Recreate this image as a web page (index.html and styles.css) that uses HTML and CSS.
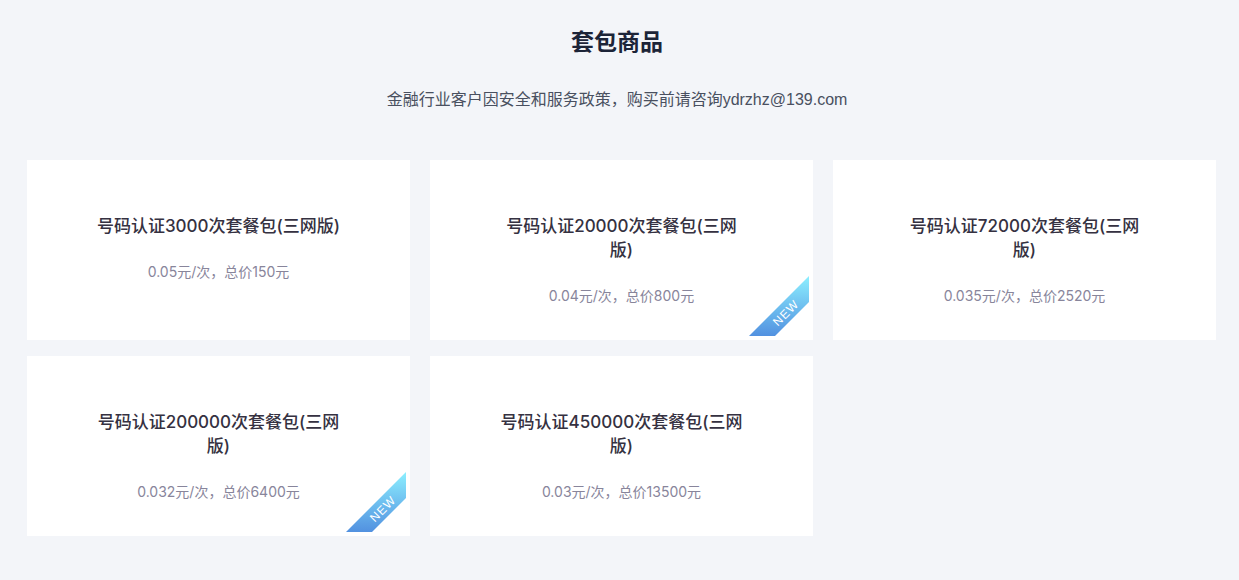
FILE: index.html
```html
<!DOCTYPE html>
<html lang="zh-CN">
<head>
<meta charset="utf-8">
<meta name="viewport" content="width=device-width, initial-scale=1">
<title>套包商品</title>
<link rel="stylesheet" href="styles.css">
</head>
<body>
<svg class="defs" width="0" height="0" aria-hidden="true">
  <defs>
    <linearGradient id="ribbon" x1="0" y1="0" x2="0" y2="1">
      <stop offset="0" stop-color="#8cefff"/>
      <stop offset="1" stop-color="#5291e0"/>
    </linearGradient>
  </defs>
</svg>
<main class="packages">
  <header class="intro">
    <h1 class="intro-title">套包商品</h1>
    <p class="intro-note">金融行业客户因安全和服务政策，购买前请咨询ydrzhz@139.com</p>
  </header>
  <section class="grid">
    <article class="card">
      <h2 class="card-title">号码认证3000次套餐包(三网版)</h2>
      <p class="card-price">0.05元/次，总价150元</p>
    </article>
    <article class="card">
      <h2 class="card-title">号码认证20000次套餐包(三网版)</h2>
      <p class="card-price">0.04元/次，总价800元</p>
      <svg class="badge" viewBox="0 0 60 60" role="img" aria-label="NEW">
        <path d="M0 60 60 0V26L26 60Z" fill="url(#ribbon)"/>
        <text class="badge-text" x="37" y="41" transform="rotate(-45 37 37)">NEW</text>
      </svg>
    </article>
    <article class="card">
      <h2 class="card-title">号码认证72000次套餐包(三网版)</h2>
      <p class="card-price">0.035元/次，总价2520元</p>
    </article>
    <article class="card">
      <h2 class="card-title">号码认证200000次套餐包(三网版)</h2>
      <p class="card-price">0.032元/次，总价6400元</p>
      <svg class="badge" viewBox="0 0 60 60" role="img" aria-label="NEW">
        <path d="M0 60 60 0V26L26 60Z" fill="url(#ribbon)"/>
        <text class="badge-text" x="37" y="41" transform="rotate(-45 37 37)">NEW</text>
      </svg>
    </article>
    <article class="card">
      <h2 class="card-title">号码认证450000次套餐包(三网版)</h2>
      <p class="card-price">0.03元/次，总价13500元</p>
    </article>
  </section>
</main>
</body>
</html>
```
FILE: styles.css
```css
* {
  box-sizing: border-box;
}

body {
  margin: 0;
  background: #f3f5f9;
  font-family: Inter, "Noto Sans CJK SC", sans-serif;
}

h1,
h2,
p {
  margin: 0;
}

.defs {
  position: absolute;
}

.packages {
  padding: 24px 0 44px;
}

.intro {
  padding-right: 5px;
  text-align: center;
}

.intro-title {
  color: #1c2438;
  font-size: 23px;
  font-weight: 600;
  line-height: 36px;
}

.intro-note {
  margin-top: 28px;
  color: #495060;
  font-family: "Liberation Sans", "Noto Sans CJK SC", sans-serif;
  font-size: 16px;
  line-height: 24px;
}

.grid {
  display: grid;
  grid-template-columns: repeat(3, 1fr);
  gap: 16px 20px;
  margin-top: 48px;
  padding: 0 23px 0 27px;
}

.card {
  position: relative;
  min-height: 180px;
  padding: 54px 68px 32px;
  background: #fff;
  text-align: center;
}

.card-title {
  color: #353141;
  font-size: 17px;
  font-weight: 500;
  line-height: 24px;
}

.card-price {
  margin-top: 24px;
  color: #88859b;
  font-size: 14px;
  line-height: 20px;
}

.badge {
  position: absolute;
  right: 4px;
  bottom: 4px;
  width: 60px;
  height: 60px;
}

.badge-text {
  fill: #fff;
  font-family: "Liberation Sans", sans-serif;
  font-size: 12px;
  letter-spacing: 1px;
  text-anchor: middle;
}
```
